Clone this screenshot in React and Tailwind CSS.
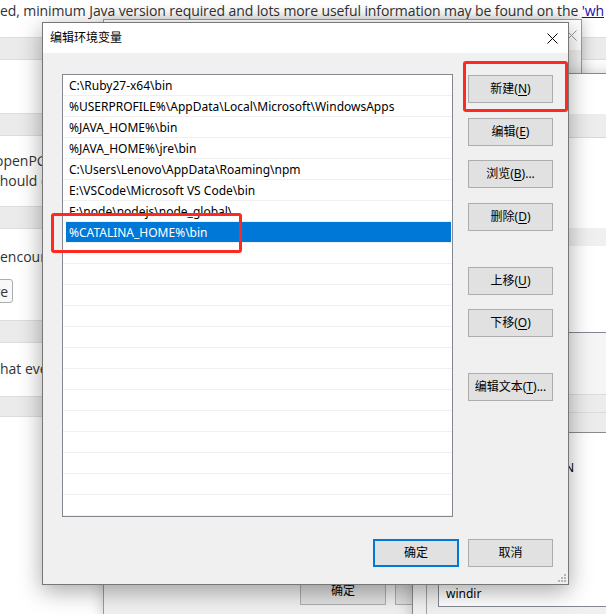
import React from 'react';

const ui = "font-['Noto_Sans','Noto_Sans_CJK_SC',sans-serif]";
const web = "font-['Open_Sans','Noto_Sans',sans-serif]";

const paths = [
  'C:\\Ruby27-x64\\bin',
  '%USERPROFILE%\\AppData\\Local\\Microsoft\\WindowsApps',
  '%JAVA_HOME%\\bin',
  '%JAVA_HOME%\\jre\\bin',
  'C:\\Users\\Lenovo\\AppData\\Roaming\\npm',
  'E:\\VSCode\\Microsoft VS Code\\bin',
  'E:\\node\\nodejs\\node_global\\',
];

// only the first and last rows peek out from behind the front dialog
const sysVars = ['PROCESSOR_REVISION', '', '', '', '', '', 'windir'];

function CloseIcon({ color = '#000' }) {
  return (
    <svg width="11" height="11" viewBox="0 0 11 11">
      <path d="M0.5 0.5 L10.5 10.5 M10.5 0.5 L0.5 10.5" stroke={color} strokeWidth="1" />
    </svg>
  );
}

function Btn({ label, k, suffix = '', className = '' }) {
  return (
    <div className={`w-[85px] h-[28px] shrink-0 flex items-center justify-center bg-[#e1e1e1] border border-[#adadad] text-[12px] text-black ${className}`}>
      <span>
        {label}
        {k && (
          <>
            (<span className="underline underline-offset-[2px]">{k}</span>){suffix}
          </>
        )}
      </span>
    </div>
  );
}

function Band() {
  return <div className="h-[23px] bg-[#ebebeb] border-y border-[#dddddd]" />;
}

export default function App() {
  return (
    <div className={`relative w-[606px] h-[614px] overflow-hidden bg-white ${ui}`}>
      {/* web page behind */}
      <div className={`absolute inset-0 flex flex-col text-[14px] text-[#333] ${web}`}>
        <div className="h-[21px] leading-[21px] whitespace-nowrap tracking-[-0.1px]">
          ed, minimum Java version required and lots more useful information may be found on the{' '}
          <span className="text-[#1a0dab] underline">'wh</span>
        </div>
        <div className="h-[16px]" />
        <Band />
        <div className="h-[53px]" />
        <Band />
        <div className="pt-[15px] leading-[20px] whitespace-nowrap">
          <div className="-ml-[5px]">openPGP</div>
          <div className="-ml-[7px]">should c</div>
        </div>
        <div className="h-[15px]" />
        <Band />
        <div className="pt-[18px] leading-[20px] whitespace-nowrap">encoura</div>
        <div className="pt-[12px] flex">
          <div className="-ml-[48px] w-[61px] h-[24px] border border-[#adadad] rounded-[3px] bg-[#f8f8f8] flex items-center justify-end pr-[4px] text-[14px]">
            Save
          </div>
        </div>
        <div className="h-[17px]" />
        <Band />
        <div className="pt-[16px] leading-[20px] whitespace-nowrap -ml-[13px]">What eve</div>
        <div className="h-[17px]" />
        <div className="h-[21px] bg-[#ebebeb] border-y border-[#dddddd]" />
      </div>

      {/* window A (behind) */}
      <div className="absolute left-[103px] top-[19px] w-[479px] h-[600px] border border-[#9a9a9a] bg-[#f0f0f0] shadow-[0_0_14px_rgba(0,0,0,0.22)] flex flex-col">
        <div className="h-[30px] bg-white flex items-center justify-end pr-[4px]">
          <CloseIcon color="#9a9a9a" />
        </div>
        <div className="flex-1 flex flex-col justify-end pb-[13px]">
          <div className="flex gap-[9px] pl-[196px]">
            <Btn label="确定" className="w-[86px]" />
            <Btn label="" />
          </div>
        </div>
      </div>

      {/* window B (behind) */}
      <div className="absolute left-[412px] top-[73px] w-[240px] h-[560px] border-l border-t border-[#8a8a8a] bg-[#f0f0f0] shadow-[0_0_14px_rgba(0,0,0,0.22)] flex flex-col">
        <div className="h-[40px] bg-white" />
        <div className="h-[24px] bg-[#ededed] border-b border-[#d9d9d9]" />
        <div className="h-[90px] bg-white" />
        <div className="h-[18px] bg-[#f0f0f0]" />
        <div className="h-[86px] bg-white" />
        <div className="flex-1 flex pl-[13px]">
          <div className="flex-1 border-l border-[#a0a0a0] pl-[11px]">
            <div className="h-[275px] border border-[#828790] bg-white flex flex-col overflow-hidden">
              <div className="h-[62px] shrink-0 bg-[#f5f5f5] border-b border-[#dcdcdc]" />
              <div className="h-[18px] shrink-0 bg-[#ececec] border-b border-[#dcdcdc]" />
              <div className="h-[20px] shrink-0 bg-[#ececec] border-b border-[#8a8a8a]" />
              <div className="pt-[24px]">
                {sysVars.map((v, i) => (
                  <div key={i} className="h-[21px] flex items-center pl-[7px] text-[12px] text-black whitespace-nowrap">
                    {v}
                  </div>
                ))}
              </div>
            </div>
          </div>
        </div>
      </div>

      {/* front dialog */}
      <div className="absolute left-[42px] top-[22px] w-[527px] h-[563px] border border-[#777777] bg-[#f0f0f0] shadow-[0_6px_22px_rgba(0,0,0,0.35)] flex flex-col">
        <div className="h-[30px] shrink-0 bg-white flex items-center justify-between pl-[7px] pr-[10px]">
          <span className="text-[12px] text-black">编辑环境变量</span>
          <CloseIcon />
        </div>
        <div className="flex-1 flex flex-col pl-[19px] pr-[15px] pt-[21px]">
          <div className="flex gap-[15px]">
            <div className="w-[391px] h-[443px] border border-[#828790] bg-white overflow-hidden">
              {paths.map((p) => (
                <div key={p} className="h-[21px] border-b border-[#f0f0f0] flex items-center pl-[6px] pt-[2px] text-[12px] text-black whitespace-nowrap">
                  {p}
                </div>
              ))}
              <div className="h-[21px] border-b border-[#f0f0f0] flex items-center pl-[3px] pr-[1px]">
                <div className="w-full h-[20px] bg-[#0078d7] flex items-center pl-[3px] pt-[2px] text-[12px] text-white whitespace-nowrap">
                  %CATALINA_HOME%\bin
                </div>
              </div>
              {Array.from({ length: 14 }).map((_, i) => (
                <div key={i} className="h-[21px] border-b border-[#f0f0f0]" />
              ))}
            </div>
            <div className="flex flex-col pt-[1px]">
              <Btn label="新建" k="N" />
              <Btn label="编辑" k="E" className="mt-[15px]" />
              <Btn label="浏览" k="B" suffix="..." className="mt-[14px]" />
              <Btn label="删除" k="D" className="mt-[15px]" />
              <Btn label="上移" k="U" className="mt-[36px]" />
              <Btn label="下移" k="O" className="mt-[14px]" />
              <Btn label="编辑文本" k="T" suffix="..." className="mt-[36px]" />
            </div>
          </div>
          <div className="flex justify-end gap-[9px] mt-[22px]">
            <div className="w-[86px] h-[28px] flex items-center justify-center bg-[#e1e1e1] border-2 border-[#0078d7] text-[12px] text-black">
              确定
            </div>
            <Btn label="取消" />
          </div>
        </div>
        {/* resize grip */}
        <svg className="absolute right-[2px] bottom-[2px]" width="8" height="8" viewBox="0 0 8 8">
          <g fill="#b5b5b5">
            <rect x="6" y="0" width="2" height="2" />
            <rect x="3" y="3" width="2" height="2" />
            <rect x="6" y="3" width="2" height="2" />
            <rect x="0" y="6" width="2" height="2" />
            <rect x="3" y="6" width="2" height="2" />
            <rect x="6" y="6" width="2" height="2" />
          </g>
        </svg>
      </div>

      {/* red annotation boxes */}
      <div className="absolute left-[51px] top-[213px] w-[191px] h-[40px] border-[3px] border-[#fe2a22] rounded-[3px]" />
      <div className="absolute left-[463px] top-[61px] w-[105px] h-[51px] border-[3px] border-[#fe2a22] rounded-[3px]" />
    </div>
  );
}
